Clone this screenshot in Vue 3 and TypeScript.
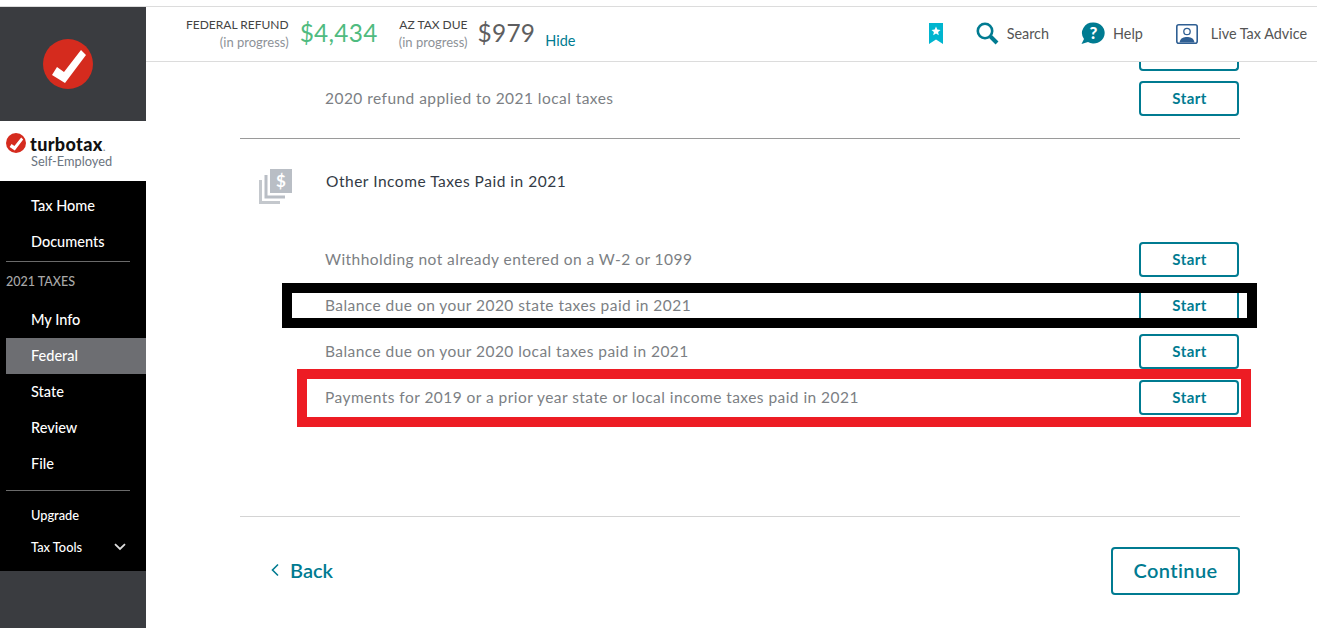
<script setup lang="ts">
const topNav = ['Tax Home', 'Documents']
const taxNav = ['My Info', 'Federal', 'State', 'Review', 'File']
const rows = [
  'Withholding not already entered on a W-2 or 1099',
  'Balance due on your 2020 state taxes paid in 2021',
  'Balance due on your 2020 local taxes paid in 2021',
  'Payments for 2019 or a prior year state or local income taxes paid in 2021',
]
</script>

<template>
  <div class="page">
    <aside class="side">
      <div class="side-top">
        <svg class="mark" viewBox="0 0 50 50" width="50" height="50">
          <circle cx="25" cy="25" r="25" fill="#d52b1e" />
          <path d="M9 36 L14 28 L21 33 L38 11 L43 16 L22 44 Z" fill="#fff" />
        </svg>
      </div>
      <div class="brand">
        <div class="brand-line">
          <svg viewBox="0 0 20 20" width="20" height="20">
            <circle cx="10" cy="10" r="10" fill="#d52b1e" />
            <path d="M3.6 14 L5.6 11 L8.4 13 L15.2 4.4 L17.2 6.4 L8.8 17.6 Z" fill="#fff" />
          </svg>
          <span class="brand-name">turbotax<small>.</small></span>
        </div>
        <div class="brand-sub">Self-Employed</div>
      </div>
      <nav class="nav">
        <a v-for="n in topNav" :key="n" class="item">{{ n }}</a>
        <div class="nav-rule first"></div>
        <div class="nav-head">2021 TAXES</div>
        <a v-for="n in taxNav" :key="n" class="item" :class="{ active: n === 'Federal' }">{{ n }}</a>
        <div class="nav-rule second"></div>
        <a class="item small up">Upgrade</a>
        <a class="item small tools">
          Tax Tools
          <svg viewBox="0 0 12 8" width="12" height="8"><path d="M1 1.2 L6 6 L11 1.2" fill="none" stroke="#ddd" stroke-width="1.8" /></svg>
        </a>
      </nav>
      <div class="side-bottom"></div>
    </aside>

    <main class="main">
      <header class="bar">
        <div class="tax">
          <div class="tax-label"><div class="tl">FEDERAL REFUND</div><div class="ts">(in progress)</div></div>
          <div class="amount green">$4,434</div>
          <div class="tax-label due"><div class="tl">AZ TAX DUE</div><div class="ts">(in progress)</div></div>
          <div class="amount dark">$979</div>
          <a class="hide">Hide</a>
        </div>
        <div class="tools-bar">
          <svg class="bookmark" viewBox="0 0 14 21" width="14" height="21">
            <path d="M0 0 H14 V21 L7 16.5 L0 21 Z" fill="#00b5cf" />
            <path d="M7 3.5 L8.3 6.6 L11.5 6.9 L9.1 9 L9.8 12.2 L7 10.5 L4.2 12.2 L4.9 9 L2.5 6.9 L5.7 6.6 Z" fill="#fff" />
          </svg>
          <a class="tool search">
            <svg viewBox="0 0 23 23" width="23" height="23">
              <circle cx="9" cy="9" r="7.2" fill="none" stroke="#007b91" stroke-width="2.6" />
              <path d="M14.5 14.5 L21 21" stroke="#007b91" stroke-width="4" />
            </svg>
            Search
          </a>
          <a class="tool help">
            <svg viewBox="0 0 24 23" width="24" height="23">
              <path d="M12.5 0.5 A11 10.5 0 1 1 7 20 L0.5 22 L3 17 A11 10.5 0 0 1 12.5 0.5 Z" fill="#007b91" />
              <text x="12.5" y="16.5" class="q">?</text>
            </svg>
            Help
          </a>
          <a class="tool advice">
            <svg viewBox="0 0 22 20" width="22" height="20">
              <rect x="0.8" y="0.8" width="20.4" height="18.4" rx="2" fill="#fff" stroke="#2f5f93" stroke-width="1.6" />
              <circle cx="11" cy="7.5" r="3.2" fill="#fff" stroke="#2f5f93" stroke-width="1.3" />
              <path d="M3.5 18.5 C4.5 13.5 8 13 11 13 C14 13 17.5 13.5 18.5 18.5 Z" fill="#2f5f93" />
            </svg>
            Live Tax Advice
          </a>
        </div>
      </header>

      <div class="content">
        <div class="clipped"></div>
        <div class="row first-row">
          <span>2020 refund applied to 2021 local taxes</span>
          <button class="start">Start</button>
        </div>
        <div class="sep"></div>
        <div class="group">
          <svg viewBox="0 0 33 35" width="33" height="35" class="money">
            <path d="M0 11 H3 V32 H21 V35 H0 Z" fill="#c4c8cd" />
            <path d="M5.5 6 H8.5 V26.5 H26 V29.5 H5.5 Z" fill="#b9bec5" />
            <rect x="11" y="0" width="22" height="24" fill="#b9bec5" />
            <text x="22" y="18" class="dollar">$</text>
          </svg>
          <h2>Other Income Taxes Paid in 2021</h2>
        </div>
        <div class="list">
          <div v-for="r in rows" :key="r" class="row">
            <span>{{ r }}</span>
            <button class="start">Start</button>
          </div>
        </div>
        <div class="sep light"></div>
        <div class="foot">
          <a class="back">
            <svg viewBox="0 0 8 14" width="8" height="14"><path d="M7 1.5 L1.5 7 L7 12.5" fill="none" stroke="#007b91" stroke-width="1.6" /></svg>
            Back
          </a>
          <button class="continue">Continue</button>
        </div>
      </div>
    </main>

    <div class="mark-box black"></div>
    <div class="mark-box red"></div>
  </div>
</template>

<style>
html, body { margin: 0; background: #fff; }
</style>

<style scoped>
.page {
  position: relative;
  width: 1317px;
  height: 628px;
  overflow: hidden;
  display: flex;
  padding-top: 6px;
  box-sizing: border-box;
  background: #fff;
  font-family: Lato, "Open Sans", sans-serif;
}
.page::before {
  content: "";
  position: absolute;
  left: 0; right: 0; top: 6px;
  height: 1px;
  background: #dcdcdc;
}
.side {
  width: 146px;
  flex: none;
  margin-top: 1px;
  display: flex;
  flex-direction: column;
  position: relative;
}
.side-top {
  height: 114px;
  background: #3a3c40;
  display: flex;
  align-items: center;
  justify-content: center;
}
.mark { margin-left: -11px; }
.brand {
  height: 60px;
  box-sizing: border-box;
  padding: 12px 0 0 6px;
  background: #fff;
}
.brand-line { display: flex; align-items: center; gap: 4px; height: 20px; }
.brand-name { font-size: 18px; font-weight: 900; color: #111; letter-spacing: 0.35px; line-height: 20px; padding-top: 4px; }
.brand-name small { font-size: 12px; color: #888; font-weight: 400; }
.brand-sub { font-size: 12.8px; color: #6b7480; margin: 0 0 0 25px; line-height: 16px; }
.nav {
  height: 390px;
  box-sizing: border-box;
  background: #000;
  padding-top: 7px;
  display: flex;
  flex-direction: column;
}
.item {
  display: block;
  height: 36px;
  line-height: 36px;
  margin-left: 6px;
  padding-left: 25px;
  color: #fff;
  font-size: 14.5px;
  font-weight: 500;
}
.item.active { background: #6d6e72; }
.item.small { font-size: 12.8px; height: 32px; line-height: 32px; }
.item.up { margin-top: 8px; }
.tools { display: flex; align-items: center; justify-content: space-between; padding-right: 20px; }
.nav-rule { height: 1px; background: #6a6a6a; margin-left: 6px; width: 124px; }
.nav-rule.first { margin-top: 1px; }
.nav-rule.second { margin-top: 8px; }
.nav-head { color: #a8a8a8; font-size: 12.5px; font-weight: 500; line-height: 18px; padding: 11px 0 11px 6px; height: 18px; }
.side-bottom { flex: 1; background: #3a3c40; }

.main { flex: 1; min-width: 0; display: flex; flex-direction: column; }
.bar {
  height: 55px;
  margin-top: 1px;
  box-sizing: border-box;
  border-bottom: 1px solid #dcdcdc;
  display: flex;
  justify-content: space-between;
  padding: 0 10px 0 40px;
}
.tax { display: flex; align-items: flex-start; }
.tax-label { text-align: right; margin-top: 9px; }
.tl { font-size: 12px; line-height: 17px; color: #444; }
.ts { font-size: 13px; line-height: 19px; color: #8d9298; }
.amount { font-size: 24.4px; line-height: 30px; margin: 11px 0 0 12px; color: #5e5e60; letter-spacing: 0.3px; }
.amount.green { color: #4fbb80; margin-left: 11px; }
.amount.dark { margin-left: 10px; }
.due { margin-left: 21px; }
.hide { font-size: 14.5px; color: #007b91; margin: 25px 0 0 10px; line-height: 17px; }
.tools-bar { display: flex; align-items: center; padding-bottom: 1px; }
.bookmark { margin-right: 33px; }
.tool { display: flex; align-items: center; font-size: 14.4px; color: #555; gap: 9px; }
.search { margin-right: 32px; gap: 8px; }
.help { margin-right: 33px; gap: 8px; }
.advice { gap: 13px; }
.q { font: 900 17px Lato, sans-serif; fill: #fff; text-anchor: middle; }

.content { flex: 1; padding: 0 77px 0 94px; overflow: hidden; display: flex; flex-direction: column; }
.clipped {
  height: 9px;
  width: 100px;
  box-sizing: border-box;
  align-self: flex-end;
  margin-right: 1px;
  border: 2px solid #007b91;
  border-top: none;
  border-radius: 0 0 4px 4px;
}
.row {
  display: flex;
  align-items: center;
  justify-content: space-between;
  height: 35px;
  margin-bottom: 11px;
  padding: 0 1px 0 85px;
  font-size: 15.5px;
  color: #7c7f84;
  letter-spacing: 0.45px;
}
.row span { padding-bottom: 2px; }
.first-row { margin-top: 10px; margin-bottom: 0; }
.start {
  width: 100px;
  height: 35px;
  flex: none;
  border: 2px solid #007b91;
  border-radius: 4px;
  background: #fff;
  color: #007b91;
  font: 700 15px Lato, sans-serif;
  letter-spacing: 0.4px;
  padding: 0 0 1px 1px;
}
.sep { height: 1px; background: #9a9a9a; margin-top: 22px; }
.sep.light { background: #d4d4d4; margin-top: 90px; }
.group { display: flex; align-items: flex-start; height: 103px; padding-left: 19px; }
.money { margin-top: 30px; }
.dollar { font: 700 17px Lato, sans-serif; fill: #fff; text-anchor: middle; }
h2 {
  margin: 32px 0 0 34px;
  font-size: 15.5px;
  line-height: 20px;
  font-weight: 400;
  color: #333a45;
  letter-spacing: 0.52px;
}
.foot { display: flex; justify-content: space-between; align-items: center; margin-top: 30px; }
.back {
  display: flex;
  align-items: center;
  gap: 11px;
  margin-left: 31px;
  padding-bottom: 2px;
  color: #007b91;
  font-size: 20px;
  font-weight: 600;
}
.continue {
  width: 129px;
  height: 48px;
  border: 2px solid #007b91;
  border-radius: 4px;
  background: #fff;
  color: #007b91;
  font: 600 20px Lato, sans-serif;
  letter-spacing: 0.4px;
  padding: 0 0 2px;
}
.mark-box { position: absolute; box-sizing: border-box; border: 10px solid; pointer-events: none; }
.black { left: 282px; top: 283px; width: 975px; height: 45px; border-color: #000; }
.red { left: 297px; top: 369px; width: 954px; height: 58px; border-color: #ed1c24; }
</style>
